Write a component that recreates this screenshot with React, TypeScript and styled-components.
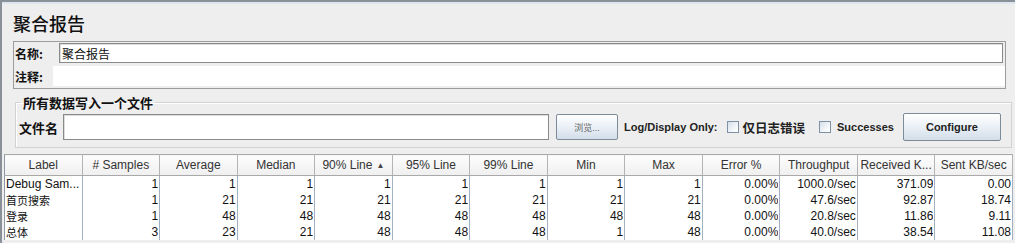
import React from 'react'
import styled, { createGlobalStyle } from 'styled-components'

const GlobalStyle = createGlobalStyle`
  html, body {
    margin: 0;
    padding: 0;
    background: #eeeeee;
  }
  body {
    font-family: "Liberation Sans", "Noto Sans CJK SC", sans-serif;
    color: #1a1a1a;
  }
`

const FONT = `"Liberation Sans", "Noto Sans CJK SC", sans-serif`

const Frame = styled.div`
  width: 1015px;
  height: 243px;
  box-sizing: border-box;
  border-top: 2px solid #8a9097;
  border-left: 2px solid #8a9097;
  background: #eeeeee;
  overflow: hidden;
  display: flex;
  flex-direction: column;
`

const TopGlow = styled.div`
  height: 2px;
  flex: none;
  background: #dde7f1;
`

const Title = styled.div`
  margin: 11px 0 9px 11px;
  font-family: "Noto Sans CJK SC", sans-serif;
  font-size: 18px;
  font-weight: 500;
  line-height: 17px;
  color: #111;
`

const NamePanel = styled.div`
  flex: none;
  margin: 0 9px 0 11px;
  border: 1px solid #9c9c9c;
  height: 46px;
  display: flex;
  flex-direction: column;
`

const FieldRow = styled.div<{ $top: number }>`
  display: flex;
  align-items: center;
  margin-top: ${p => p.$top}px;
  height: 20px;
`

const FieldLabel = styled.span<{ $w: number; $size?: number }>`
  width: ${p => p.$w}px;
  flex: none;
  padding-left: 1px;
  box-sizing: border-box;
  font-family: "Noto Sans CJK SC", sans-serif;
  font-size: ${p => p.$size ?? 12}px;
  font-weight: 700;
  color: #111;
`

const TextInput = styled.div<{ $w?: number; $h?: number }>`
  ${p => (p.$w ? `width: ${p.$w}px; flex: none;` : 'flex: 1;')}
  height: ${p => p.$h ?? 20}px;
  box-sizing: border-box;
  background: #ffffff;
  border: 1px solid #8a8a8a;
  box-shadow: inset 1px 1px 0 #dcdcdc;
  display: flex;
  align-items: center;
  padding-left: 2px;
  font-family: "Noto Sans CJK SC", sans-serif;
  font-size: 12px;
  color: #111;
`

const NameInput = styled(TextInput)`
  margin-right: 2px;
`

const CommentArea = styled.div`
  flex: 1;
  height: 20px;
  background: #ffffff;
`

const FileSet = styled.fieldset`
  flex: none;
  margin: 6px 3px 0 13px;
  padding: 3px 0 0 2px;
  border: 1px solid #d2d2d2;
  box-shadow: 1px 1px 0 #ffffff inset;
  height: 53px;
  box-sizing: border-box;
  min-width: 0;
`

const Legend = styled.legend`
  margin-left: 3px;
  padding: 0 2px;
  font-family: "Noto Sans CJK SC", sans-serif;
  font-size: 13px;
  font-weight: 700;
  line-height: 15px;
  color: #111;
`

const FileRow = styled.div`
  display: flex;
  align-items: center;
  height: 28px;
`

const Gap = styled.span<{ $w: number }>`
  width: ${p => p.$w}px;
  flex: none;
`

const Button = styled.div<{ $w: number; $small?: boolean }>`
  width: ${p => p.$w}px;
  height: ${p => (p.$small ? 26 : 28)}px;
  flex: none;
  box-sizing: border-box;
  border: 1px solid #7d8b99;
  border-radius: 2px;
  background: linear-gradient(#ffffff 0%, #eef3f8 40%, #d3deea 100%);
  display: flex;
  align-items: center;
  justify-content: center;
  font-family: ${FONT};
  font-size: ${p => (p.$small ? 9 : 11)}px;
  font-weight: ${p => (p.$small ? 400 : 700)};
  color: ${p => (p.$small ? '#666' : '#222')};
`

const BoldText = styled.span`
  flex: none;
  font-family: ${FONT};
  font-size: 11px;
  font-weight: 700;
  color: #222;
  white-space: nowrap;
`

const CjkBold = styled(BoldText)`
  font-family: "Noto Sans CJK SC", sans-serif;
  font-size: 12.5px;
`

const Check = styled.span`
  width: 12px;
  height: 12px;
  flex: none;
  box-sizing: border-box;
  border: 1px solid #7f91a5;
  background: linear-gradient(135deg, #d5dfea 0%, #f7f9fb 70%, #ffffff 100%);
`

const Table = styled.table`
  flex: none;
  margin: 6px 0 0 2px;
  width: 1009px;
  table-layout: fixed;
  border-collapse: collapse;
  font-family: ${FONT};
  font-size: 12px;
  border-left: 1px solid #8e9aa8;
`

const Th = styled.th`
  height: 20px;
  padding: 0 2px;
  font-weight: 400;
  color: #333;
  background: linear-gradient(#fdfdfd, #efefef);
  border-top: 1px solid #a9a9a9;
  border-bottom: 1px solid #a9a9a9;
  border-right: 1px solid #b4b4b4;
  white-space: nowrap;
  overflow: hidden;
`

const Td = styled.td<{ $left?: boolean }>`
  height: 16px;
  padding: 0 1px;
  background: #ffffff;
  color: #111;
  text-align: ${p => (p.$left ? 'left' : 'right')};
  border-right: 1px solid #a3b0c2;
`

const CellText = styled.div<{ $cjk?: boolean }>`
  height: 16px;
  line-height: 16px;
  white-space: nowrap;
  overflow: hidden;
  ${p => (p.$cjk ? 'font-family: "Noto Sans CJK SC", sans-serif; font-size: 11px;' : '')}
`

const Arrow = styled.span`
  font-size: 8px;
  margin-left: 4px;
  color: #444;
  vertical-align: 1px;
`

const headers = [
  'Label', '# Samples', 'Average', 'Median', '90% Line', '95% Line', '99% Line',
  'Min', 'Max', 'Error %', 'Throughput', 'Received K...', 'Sent KB/sec',
]

const rows: string[][] = [
  ['Debug Sam...', '1', '1', '1', '1', '1', '1', '1', '1', '0.00%', '1000.0/sec', '371.09', '0.00'],
  ['首页搜索', '1', '21', '21', '21', '21', '21', '21', '21', '0.00%', '47.6/sec', '92.87', '18.74'],
  ['登录', '1', '48', '48', '48', '48', '48', '48', '48', '0.00%', '20.8/sec', '11.86', '9.11'],
  ['总体', '3', '23', '21', '48', '48', '48', '1', '48', '0.00%', '40.0/sec', '38.54', '11.08'],
]

export default function App() {
  return (
    <>
      <GlobalStyle />
      <Frame>
        <TopGlow />
        <Title>聚合报告</Title>
        <NamePanel>
          <FieldRow $top={1}>
            <FieldLabel $w={45}>名称:</FieldLabel>
            <NameInput>聚合报告</NameInput>
          </FieldRow>
          <FieldRow $top={3}>
            <FieldLabel $w={39}>注释:</FieldLabel>
            <CommentArea />
          </FieldRow>
        </NamePanel>
        <FileSet>
          <Legend>所有数据写入一个文件</Legend>
          <FileRow>
            <FieldLabel $w={45} $size={13}>文件名</FieldLabel>
            <TextInput $w={486} $h={26} />
            <Gap $w={7} />
            <Button $w={62} $small>浏览...</Button>
            <Gap $w={6} />
            <BoldText>Log/Display Only:</BoldText>
            <Gap $w={9} />
            <Check />
            <Gap $w={4} />
            <CjkBold>仅日志错误</CjkBold>
            <Gap $w={14} />
            <Check />
            <Gap $w={6} />
            <BoldText>Successes</BoldText>
            <Gap $w={9} />
            <Button $w={98}>Configure</Button>
          </FileRow>
        </FileSet>
        <Table>
          <thead>
            <tr>
              {headers.map(h => (
                <Th key={h}>
                  {h}
                  {h === '90% Line' && <Arrow>▲</Arrow>}
                </Th>
              ))}
            </tr>
          </thead>
          <tbody>
            {rows.map(r => (
              <tr key={r[0]}>
                {r.map((c, i) => (
                  <Td key={i} $left={i === 0}>
                    <CellText $cjk={i === 0 && /[^\x00-\x7f]/.test(c)}>{c}</CellText>
                  </Td>
                ))}
              </tr>
            ))}
          </tbody>
        </Table>
      </Frame>
    </>
  )
}
